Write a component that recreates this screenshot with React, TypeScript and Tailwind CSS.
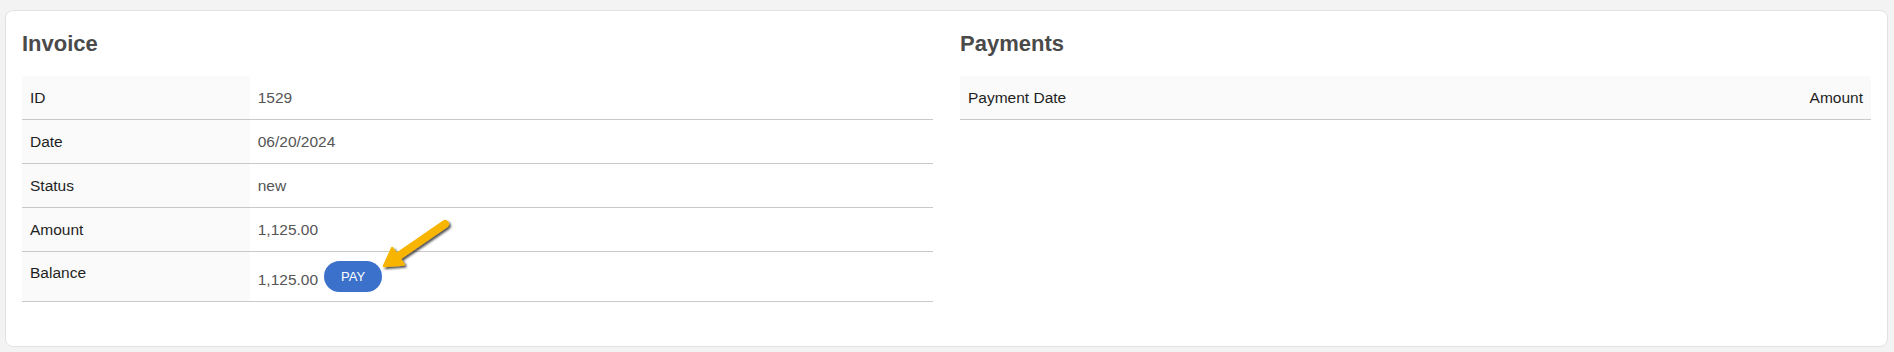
const rows = [
  { label: "ID", value: "1529" },
  { label: "Date", value: "06/20/2024" },
  { label: "Status", value: "new" },
  { label: "Amount", value: "1,125.00" },
];

const Arrow = () => (
  <svg
    className="absolute left-[50px] top-[-45px] pointer-events-none"
    width="80"
    height="60"
    viewBox="0 0 80 60"
  >
    <defs>
      <filter id="arrowShadow" x="-20%" y="-20%" width="140%" height="140%">
        <feDropShadow dx="1.8" dy="1.8" stdDeviation="1.1" floodColor="#000" floodOpacity="0.7" />
      </filter>
    </defs>
    <g filter="url(#arrowShadow)" fill="#f7b500" stroke="#f7b500">
      <line x1="71" y1="8" x2="23" y2="41" strokeWidth="8" strokeLinecap="round" />
      <polygon points="10,50 29.6,48.5 18.2,32.1" strokeWidth="2.5" strokeLinejoin="round" />
    </g>
  </svg>
);

export default function App() {
  return (
    <div
      className="min-h-[352px] bg-[#f3f3f3] pl-[5px] pr-[6px] pt-[10px] pb-[6px]"
      style={{ fontFamily: '"Liberation Sans", Arial, sans-serif' }}
    >
      <div className="bg-white border border-[#e2e2e2] rounded-[8px] px-4 pt-[20px] pb-[44px]">
        <div className="grid grid-cols-2 gap-[27px]">
          {/* Invoice */}
          <div>
            <h2 className="text-[22px] leading-[26px] font-bold text-[#4a4a4a] mb-[19px]">Invoice</h2>
            <table className="w-full border-collapse text-[15.5px] leading-[22px]">
              <tbody>
                {rows.map((r) => (
                  <tr key={r.label} className="border-b border-[#c9c9c9]">
                    <td className="w-1/4 bg-[#fafafa] px-2 pt-[11px] pb-[10px] text-[#1f1f1f] align-top">{r.label}</td>
                    <td className="px-2 pt-[11px] pb-[10px] text-[#555]">{r.value}</td>
                  </tr>
                ))}
                <tr className="border-b border-[#c9c9c9]">
                  <td className="w-1/4 bg-[#fafafa] px-2 pt-[10px] pb-[9px] text-[#1f1f1f] align-top">Balance</td>
                  <td className="px-2 pt-[9px] pb-[9px] text-[#555]">
                    <div className="flex items-end">
                      <span className="mb-[1px]">1,125.00</span>
                      <span className="relative inline-flex ml-[6px]">
                        <button className="w-[58px] h-[31px] rounded-full bg-[#3b71ca] text-white text-[13px] leading-none flex items-center justify-center">
                          PAY
                        </button>
                        <Arrow />
                      </span>
                    </div>
                  </td>
                </tr>
              </tbody>
            </table>
          </div>

          {/* Payments */}
          <div>
            <h2 className="text-[22px] leading-[26px] font-bold text-[#4a4a4a] mb-[19px]">Payments</h2>
            <table className="w-full border-collapse text-[15.5px] leading-[22px]">
              <thead>
                <tr className="bg-[#fafafa] border-b border-[#c9c9c9]">
                  <th className="px-2 pt-[11px] pb-[10px] text-left font-normal text-[#1f1f1f]">Payment Date</th>
                  <th className="px-2 pt-[11px] pb-[10px] text-right font-normal text-[#1f1f1f]">Amount</th>
                </tr>
              </thead>
              <tbody></tbody>
            </table>
          </div>
        </div>
      </div>
    </div>
  );
}
